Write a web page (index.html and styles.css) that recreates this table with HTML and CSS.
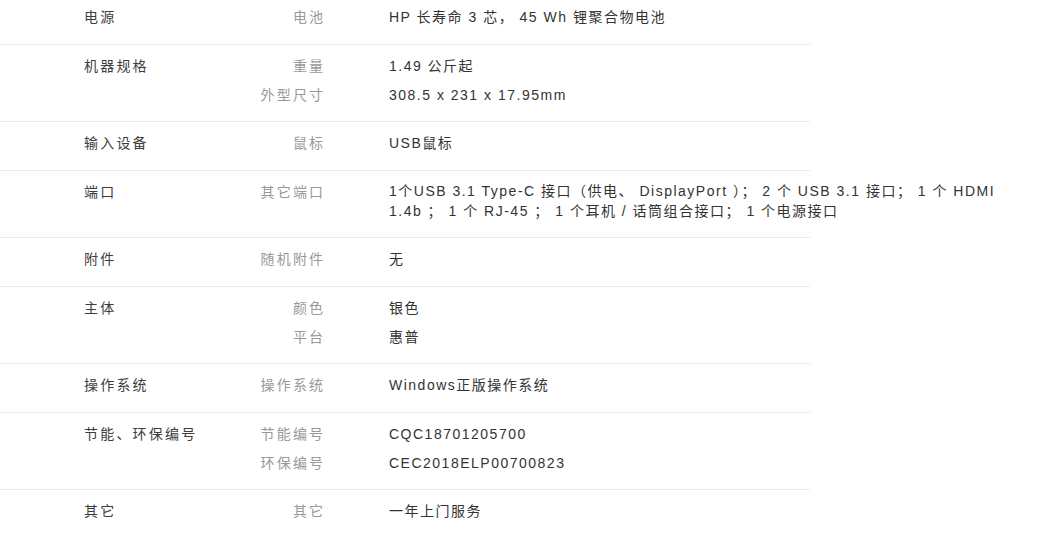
FILE: index.html
```html
<!DOCTYPE html>
<html lang="zh-CN">
<head>
<meta charset="utf-8">
<title>规格参数</title>
<link rel="stylesheet" href="styles.css">
</head>
<body>
<div class="specs">
  <div class="row">
    <div class="cat">电源</div>
    <div class="items">
      <div class="item"><div class="label">电池</div><div class="value">HP 长寿命 3 芯， 45 Wh 锂聚合物电池</div></div>
    </div>
  </div>
  <div class="row">
    <div class="cat">机器规格</div>
    <div class="items">
      <div class="item"><div class="label">重量</div><div class="value">1.49 公斤起</div></div>
      <div class="item"><div class="label">外型尺寸</div><div class="value">308.5 x 231 x 17.95mm</div></div>
    </div>
  </div>
  <div class="row">
    <div class="cat">输入设备</div>
    <div class="items">
      <div class="item"><div class="label">鼠标</div><div class="value">USB鼠标</div></div>
    </div>
  </div>
  <div class="row">
    <div class="cat">端口</div>
    <div class="items">
      <div class="item"><div class="label">其它端口</div><div class="value wrap">1个USB 3.1 Type-C 接口（供电、 DisplayPort ）； 2 个 USB 3.1 接口； 1 个 HDMI 1.4b ； 1 个 RJ-45 ； 1 个耳机 / 话筒组合接口； 1 个电源接口</div></div>
    </div>
  </div>
  <div class="row">
    <div class="cat">附件</div>
    <div class="items">
      <div class="item"><div class="label">随机附件</div><div class="value">无</div></div>
    </div>
  </div>
  <div class="row">
    <div class="cat">主体</div>
    <div class="items">
      <div class="item"><div class="label">颜色</div><div class="value">银色</div></div>
      <div class="item"><div class="label">平台</div><div class="value">惠普</div></div>
    </div>
  </div>
  <div class="row">
    <div class="cat">操作系统</div>
    <div class="items">
      <div class="item"><div class="label">操作系统</div><div class="value">Windows正版操作系统</div></div>
    </div>
  </div>
  <div class="row">
    <div class="cat">节能、环保编号</div>
    <div class="items">
      <div class="item"><div class="label">节能编号</div><div class="value">CQC18701205700</div></div>
      <div class="item"><div class="label">环保编号</div><div class="value">CEC2018ELP00700823</div></div>
    </div>
  </div>
  <div class="row last">
    <div class="cat">其它</div>
    <div class="items">
      <div class="item"><div class="label">其它</div><div class="value">一年上门服务</div></div>
    </div>
  </div>
</div>
</body>
</html>
```

FILE: styles.css
```css
html, body {
  margin: 0;
  padding: 0;
  background: #fff;
}
body {
  font-family: "Liberation Sans", Arial, "Noto Sans CJK SC", sans-serif;
  font-size: 14px;
  color: #333;
  overflow: hidden;
}
.specs {
  width: 810px;
  margin-top: -4px;
}
.row {
  display: flex;
  padding: 11px 0 16.5px 84px;
  border-bottom: 1px solid #ebebeb;
}
.row.last {
  border-bottom-color: transparent;
}
.cat {
  flex: none;
  width: 156px;
  line-height: 20px;
  letter-spacing: 2.2px;
  color: #3d3d3d;
}
.items {
  display: flex;
  flex-direction: column;
  gap: 9px;
}
.item {
  display: flex;
  line-height: 20px;
}
.label {
  flex: none;
  width: 85.3px;
  text-align: right;
  letter-spacing: 2.2px;
  color: #999;
}
.value {
  flex: none;
  width: 615px;
  margin-left: 63.7px;
  letter-spacing: 1.5px;
  color: #333;
}
.value.wrap {
  margin-top: -1px;
  margin-bottom: -1px;
  line-height: 20.5px;
}
```
